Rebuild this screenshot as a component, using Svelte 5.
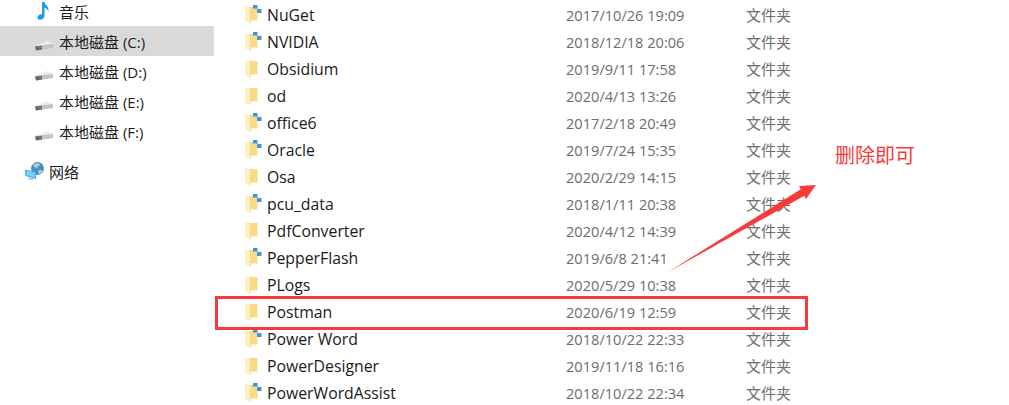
<script>
  const places = [
    { icon: 'music', label: '音乐' },
    { icon: 'disk', label: '本地磁盘 (C:)', selected: true },
    { icon: 'disk', label: '本地磁盘 (D:)' },
    { icon: 'disk', label: '本地磁盘 (E:)' },
    { icon: 'disk', label: '本地磁盘 (F:)' }
  ];

  const folders = [
    { name: 'NuGet', date: '2017/10/26 19:09', shared: true },
    { name: 'NVIDIA', date: '2018/12/18 20:06', shared: true },
    { name: 'Obsidium', date: '2019/9/11 17:58' },
    { name: 'od', date: '2020/4/13 13:26' },
    { name: 'office6', date: '2017/2/18 20:49', shared: true },
    { name: 'Oracle', date: '2019/7/24 15:35', shared: true },
    { name: 'Osa', date: '2020/2/29 14:15' },
    { name: 'pcu_data', date: '2018/1/11 20:38', shared: true },
    { name: 'PdfConverter', date: '2020/4/12 14:39' },
    { name: 'PepperFlash', date: '2019/6/8 21:41', shared: true },
    { name: 'PLogs', date: '2020/5/29 10:38' },
    { name: 'Postman', date: '2020/6/19 12:59' },
    { name: 'Power Word', date: '2018/10/22 22:33', shared: true },
    { name: 'PowerDesigner', date: '2019/11/18 16:16' },
    { name: 'PowerWordAssist', date: '2018/10/22 22:34', shared: true }
  ];
</script>

<div class="explorer">
  <nav class="sidebar">
    {#each places as place}
      <div class="place" class:selected={place.selected}>
        {#if place.icon === 'music'}
          <svg class="place-icon" width="20" height="20" viewBox="0 0 20 20">
            <path d="M9 1h2.500c.4 3 4.500 4 4 9.500-.6-1.800-2.400-3.300-4-3.700v8c0 2.500-2 4-4.500 4-1.700 0-2.500-1-2.500-2.300 0-2.200 2.300-3.600 4.500-3.300z" fill="#1e9bf0" />
          </svg>
        {:else}
          <svg class="place-icon" width="20" height="20" viewBox="0 0 20 20">
            <path d="M2 15 14 10l6 3-2 2.500z" fill="#ececec" />
            <path d="M2 15l18-2v4L3 19.500z" fill="#c4c4c4" />
            <path d="M2 15.500l7-.8v3.900l-6 .9z" fill="#6a6a6a" />
            <rect x="6.500" y="15.800" width="1.300" height="1.300" fill="#4ec07a" />
          </svg>
        {/if}
        <span>{place.label}</span>
      </div>
    {/each}

    <div class="place network">
      <svg class="place-icon" width="22" height="20" viewBox="0 0 22 20">
        <circle cx="13.500" cy="7.500" r="6.500" fill="#4d8fb8" />
        <path d="M9 4c2-2 5-2 7-1 0 2-2 2-3 4-2 0-3-1-4-3zM15 9c2 0 3 0 4 1-1 2-2 3-4 3-1-1-1-3 0-4z" fill="#9fd0e6" />
        <path d="M1 8.500 12 11v7L1.500 15z" fill="#3fa9f5" />
        <path d="M2.500 9.800 10.800 11.800v4.600l-8-2.100z" fill="#7fd0fb" />
        <path d="M5 16.500l4 1 .5 1.500-5-.5z" fill="#bbb" />
      </svg>
      <span>网络</span>
    </div>
  </nav>

  <main class="list">
    {#each folders as folder}
      <div class="row">
        <svg class="folder" width="18" height="20" viewBox="0 0 18 20">
          <path d="M5 2h8.500v13.500H5z" fill="#f9db85" />
          <path d="M1 1 6.500 3.500V19L1 16.500z" fill="#fef0c0" />
          <path d="M6 3.300l.5.200V19l-.5-.2z" fill="#eccb6e" />
          {#if folder.shared}
            <path d="M9 0h4.500v3.500H9zM13 4h4.500v4H13z" fill="#3f94dc" />
            <path d="M12.500 3l1.500 1.500" stroke="#7db8e8" stroke-width="1.200" />
          {/if}
        </svg>
        <span class="name">{folder.name}</span>
        <span class="date">{folder.date}</span>
        <span class="kind">文件夹</span>
      </div>
    {/each}
  </main>

  <div class="mark-box"></div>
  <svg class="mark-arrow" width="160" height="100" viewBox="0 0 160 100">
    <polygon points="8,92 140.750,9.250 139,6 156,5 146,19 144.250,15.750" fill="#f83a3a" />
  </svg>
  <div class="mark-note">删除即可</div>
</div>

<style>
  :global(body) {
    margin: 0;
    background: #fff;
  }

  .explorer {
    position: relative;
    display: flex;
    width: 1009px;
    height: 405px;
    overflow: hidden;
    background: #fff;
    font-family: "Open Sans", "Noto Sans CJK SC", sans-serif;
    font-size: 14.6px;
  }

  .sidebar {
    width: 214px;
    margin-right: 3px;
    margin-top: -4px;
    flex-shrink: 0;
  }

  .place {
    display: flex;
    align-items: center;
    gap: 6px;
    height: 30px;
    padding-left: 33px;
    color: #1c1c1c;
    font-size: 15px;
  }

  .place.selected {
    background: #d9d9d9;
  }

  .place.network {
    margin-top: 10px;
    gap: 3px;
    padding-left: 24px;
  }

  .place-icon {
    flex-shrink: 0;
  }

  .list {
    flex: 1;
    padding-top: 1px;
  }

  .row {
    display: grid;
    grid-template-columns: 22px 299px 180px 1fr;
    align-items: center;
    height: 27px;
    padding-left: 28px;
    white-space: nowrap;
  }

  .folder {
    margin-left: -1px;
  }

  .name {
    color: #1a1a1a;
    font-size: 15.8px;
  }

  .date,
  .kind {
    color: #6d6d6d;
  }

  .kind {
    font-size: 15px;
  }

  .mark-box {
    position: absolute;
    left: 215px;
    top: 296px;
    width: 587px;
    height: 28px;
    border: 3px solid #f83a3a;
  }

  .mark-arrow {
    position: absolute;
    left: 660px;
    top: 180px;
  }

  .mark-note {
    position: absolute;
    left: 835px;
    top: 142px;
    color: #f83a3a;
    font-size: 20px;
    line-height: 28px;
  }
</style>
